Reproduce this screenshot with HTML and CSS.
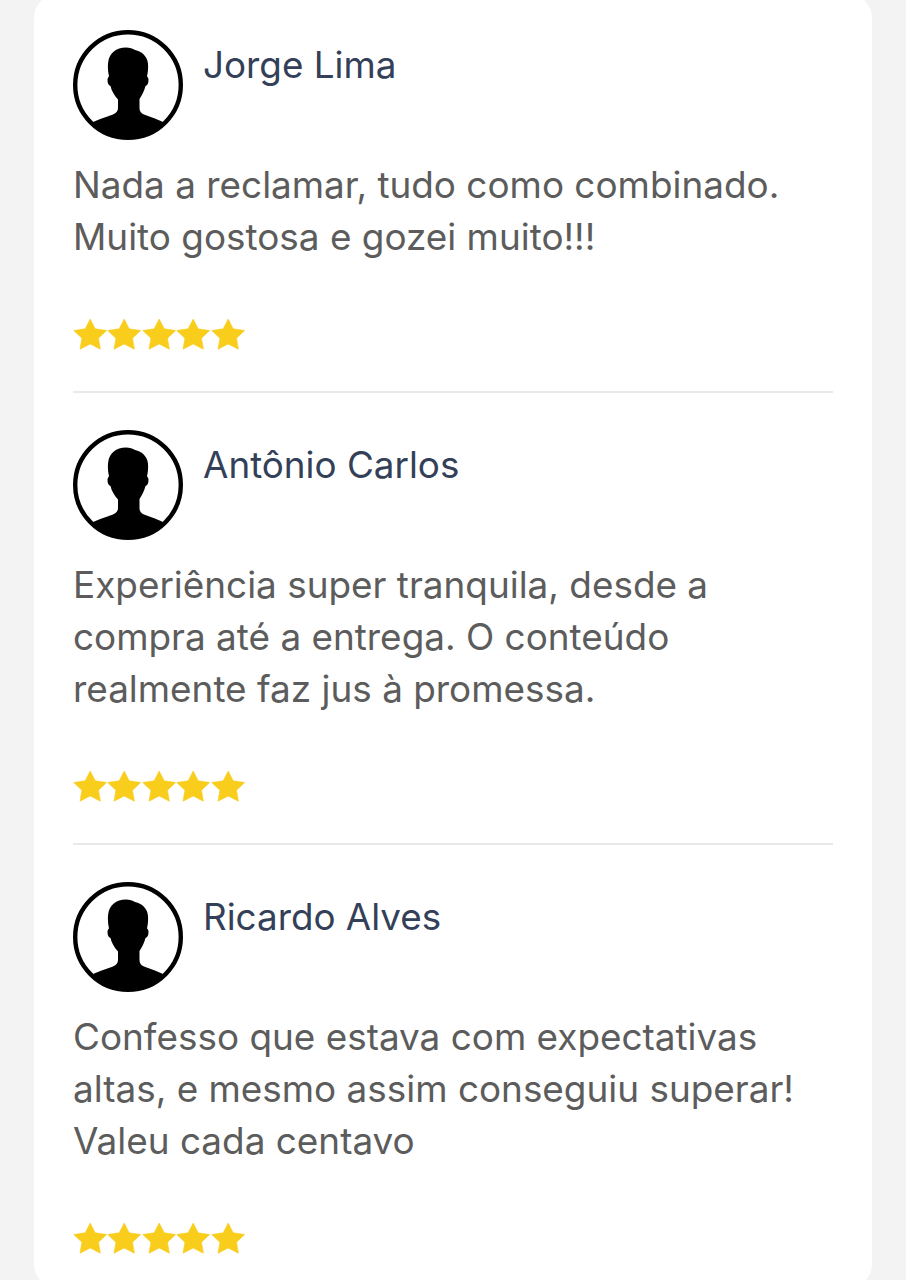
FILE: index.html
```html
<!DOCTYPE html>
<html lang="pt-BR">
<head>
<meta charset="utf-8">
<title>Avaliações</title>
<link rel="stylesheet" href="styles.css">
</head>
<body>
<svg class="defs" width="0" height="0" aria-hidden="true">
  <defs>
    <symbol id="avatar" viewBox="0 0 110 110">
      <circle cx="55" cy="55" r="53" fill="#fff"/>
      <path d="M18 93C24 90 33 87 40 84.500C43.500 83 45 81 45 78V69.500C41 65 38.500 60.500 37.500 56C35.500 55.500 34.500 53 34.500 50C34.500 48.500 35 47 36 46.500C35 42 34.500 37 35.200 32C36.500 23 43 17.500 53 17.500C57 17.500 59.500 18.500 62 20C69 21.500 74.500 26.500 75 34C75.300 38.500 74.800 43 74 46.500C75 47 75.500 48.500 75.500 50C75.500 53 74.500 55.500 72.500 56C71.500 60.500 69 65 66.500 69V78C66.500 81 68 83.500 71 84.500C78 87 86 90 92 93A53 53 0 0 1 18 93Z" fill="#000"/>
      <circle cx="55" cy="55" r="52.800" fill="none" stroke="#000" stroke-width="4.400"/>
    </symbol>
    <symbol id="star" viewBox="0 0 34 32">
      <path d="M17 1L22 10.800L33.500 12.500L25.300 20.200L27.200 31.200L17 26L6.800 31.200L8.700 20.200L0.500 12.500L12 10.800Z" fill="#f9cd1b" stroke="#f9cd1b" stroke-width="0.6" stroke-linejoin="round"/>
    </symbol>
  </defs>
</svg>
<main class="card">
  <article class="review">
    <header class="review-head">
      <svg class="avatar" aria-hidden="true"><use href="#avatar"/></svg>
      <h3 class="name">Jorge Lima</h3>
    </header>
    <p class="text">Nada a reclamar, tudo como combinado.<br>Muito gostosa e gozei muito!!!</p>
    <div class="stars" aria-label="5 estrelas">
      <svg class="star"><use href="#star"/></svg><svg class="star"><use href="#star"/></svg><svg class="star"><use href="#star"/></svg><svg class="star"><use href="#star"/></svg><svg class="star"><use href="#star"/></svg>
    </div>
  </article>
  <article class="review">
    <header class="review-head">
      <svg class="avatar" aria-hidden="true"><use href="#avatar"/></svg>
      <h3 class="name">Antônio Carlos</h3>
    </header>
    <p class="text">Experiência super tranquila, desde a<br>compra até a entrega. O conteúdo<br>realmente faz jus à promessa.</p>
    <div class="stars" aria-label="5 estrelas">
      <svg class="star"><use href="#star"/></svg><svg class="star"><use href="#star"/></svg><svg class="star"><use href="#star"/></svg><svg class="star"><use href="#star"/></svg><svg class="star"><use href="#star"/></svg>
    </div>
  </article>
  <article class="review">
    <header class="review-head">
      <svg class="avatar" aria-hidden="true"><use href="#avatar"/></svg>
      <h3 class="name">Ricardo Alves</h3>
    </header>
    <p class="text">Confesso que estava com expectativas<br>altas, e mesmo assim conseguiu superar!<br>Valeu cada centavo</p>
    <div class="stars" aria-label="5 estrelas">
      <svg class="star"><use href="#star"/></svg><svg class="star"><use href="#star"/></svg><svg class="star"><use href="#star"/></svg><svg class="star"><use href="#star"/></svg><svg class="star"><use href="#star"/></svg>
    </div>
  </article>
</main>
</body>
</html>
```
FILE: styles.css
```css
html, body {
  margin: 0;
  height: 1280px;
  overflow: hidden;
  background: #f3f3f3;
}
body {
  font-family: Inter, "Liberation Sans", sans-serif;
}
.defs {
  display: block;
  height: 0;
}
.card {
  box-sizing: border-box;
  width: 838px;
  margin: -6px 0 0 34px;
  padding: 36px 39px 0;
  background: #fff;
  border-radius: 24px;
  height: 1294px;
}
.review {
  border-bottom: 2px solid #e9e9e9;
  padding-bottom: 40px;
  margin-bottom: 37px;
}
.review:last-child {
  border-bottom: 0;
}
.review-head {
  display: flex;
  gap: 20px;
  align-items: flex-start;
}
.avatar {
  width: 110px;
  height: 110px;
  flex: none;
}
.name {
  margin: 13px 0 0;
  font-size: 36.8px;
  line-height: 44px;
  font-weight: 400;
  color: #334058;
}
.text {
  margin: 19px 0 0;
  font-size: 36.9px;
  line-height: 52px;
  color: #5c5c5c;
}
.stars {
  display: flex;
  margin-top: 54px;
  height: 34px;
  align-items: center;
}
.star {
  width: 34.4px;
  height: 32px;
  flex: none;
}
```
